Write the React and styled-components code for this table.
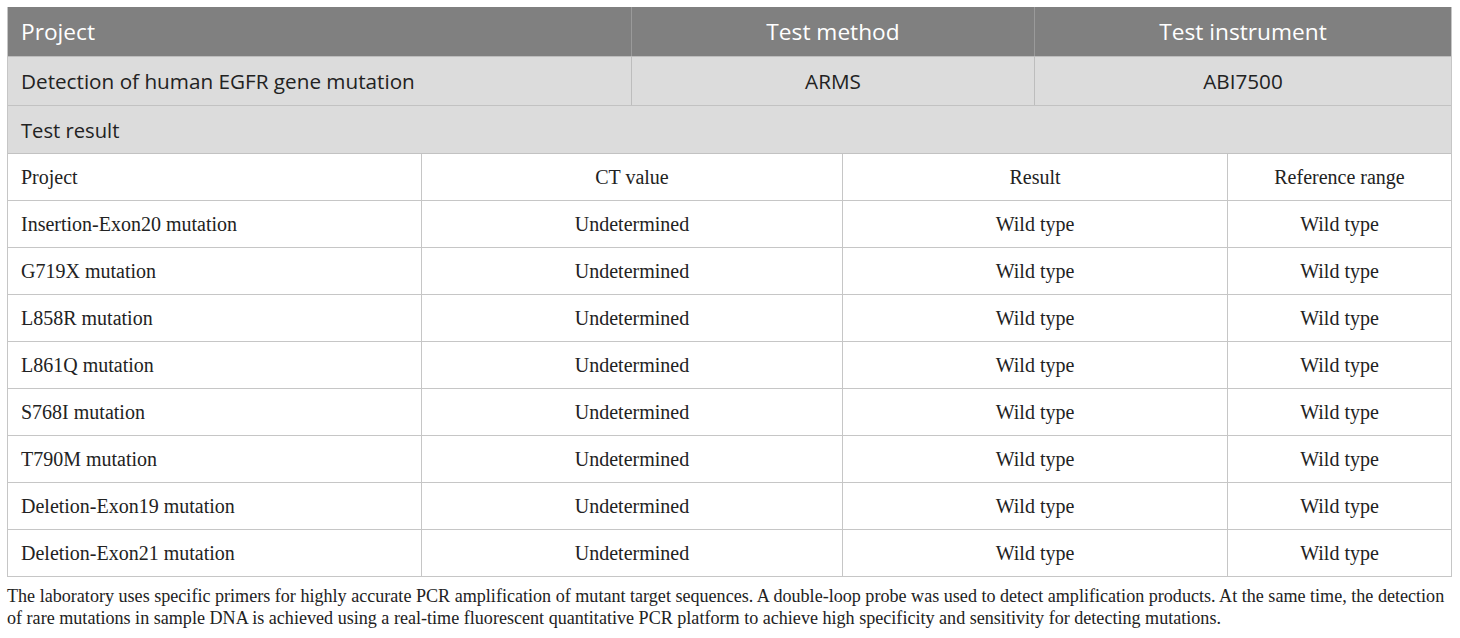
import React from "react";
import styled, { createGlobalStyle } from "styled-components";

const Global = createGlobalStyle`
  html, body { margin: 0; padding: 0; background: #ffffff; }
  body { font-family: "Liberation Serif", serif; }
`;

const Page = styled.div`
  padding: 7px 8px 0 7px;
  width: 1445px;
`;

const Table = styled.div`
  display: flex;
  flex-direction: column;
  border-left: 1px solid #c6c6c6;
  border-right: 1px solid #c6c6c6;
`;

const Row = styled.div`
  display: grid;
  grid-template-columns: ${(p) => p.$cols};
  height: ${(p) => p.$h}px;
  background: ${(p) => p.$bg || "#ffffff"};
  border-bottom: 1px solid ${(p) => p.$line || "#c6c6c6"};
  box-sizing: border-box;
`;

const Cell = styled.div`
  display: flex;
  align-items: center;
  justify-content: ${(p) => (p.$center ? "center" : "flex-start")};
  padding: 0 13px;
  box-sizing: border-box;
  border-left: ${(p) => (p.$first ? "none" : `1px solid ${p.$line || "#c6c6c6"}`)};
  font-family: ${(p) =>
    p.$sans ? '"Open Sans", "Noto Sans", sans-serif' : '"Liberation Serif", serif'};
  font-size: ${(p) => p.$size || (p.$sans ? "20.7px" : "20px")};
  color: ${(p) => p.$color || "#222222"};
  white-space: nowrap;
`;

const Note = styled.p`
  margin: 8px 0 0 0;
  font-family: "Liberation Serif", serif;
  font-size: 18.1px;
  line-height: 22px;
  color: #222222;
`;

const TOP = "623px 403px 1fr";
const BOT = "413px 421px 385px 1fr";
const HEAD = "22.7px";

const rows = [
  "Insertion-Exon20 mutation",
  "G719X mutation",
  "L858R mutation",
  "L861Q mutation",
  "S768I mutation",
  "T790M mutation",
  "Deletion-Exon19 mutation",
  "Deletion-Exon21 mutation",
];

export default function App() {
  return (
    <Page>
      <Global />
      <Table>
        <Row $cols={TOP} $h={50} $bg="#808080" $line="#bdbdbd">
          <Cell $first $sans $size={HEAD} $color="#ffffff">Project</Cell>
          <Cell $sans $center $size={HEAD} $color="#ffffff" $line="#9a9a9a">Test method</Cell>
          <Cell $sans $center $size={HEAD} $color="#ffffff" $line="#9a9a9a">Test instrument</Cell>
        </Row>
        <Row $cols={TOP} $h={49} $bg="#dcdcdc" $line="#c2c2c2">
          <Cell $first $sans>Detection of human EGFR gene mutation</Cell>
          <Cell $sans $center $line="#bdbdbd">ARMS</Cell>
          <Cell $sans $center $line="#bdbdbd">ABI7500</Cell>
        </Row>
        <Row $cols="1fr" $h={48} $bg="#dcdcdc" $line="#c2c2c2">
          <Cell $first $sans $size="20.2px">Test result</Cell>
        </Row>
        <Row $cols={BOT} $h={47}>
          <Cell $first>Project</Cell>
          <Cell $center>CT value</Cell>
          <Cell $center>Result</Cell>
          <Cell $center>Reference range</Cell>
        </Row>
        {rows.map((r) => (
          <Row key={r} $cols={BOT} $h={47}>
            <Cell $first>{r}</Cell>
            <Cell $center>Undetermined</Cell>
            <Cell $center>Wild type</Cell>
            <Cell $center>Wild type</Cell>
          </Row>
        ))}
      </Table>
      <Note>
        The laboratory uses specific primers for highly accurate PCR amplification of mutant target
        sequences. A double-loop probe was used to detect amplification products. At the same time,
        the detection of rare mutations in sample DNA is achieved using a real-time fluorescent
        quantitative PCR platform to achieve high specificity and sensitivity for detecting mutations.
      </Note>
    </Page>
  );
}
